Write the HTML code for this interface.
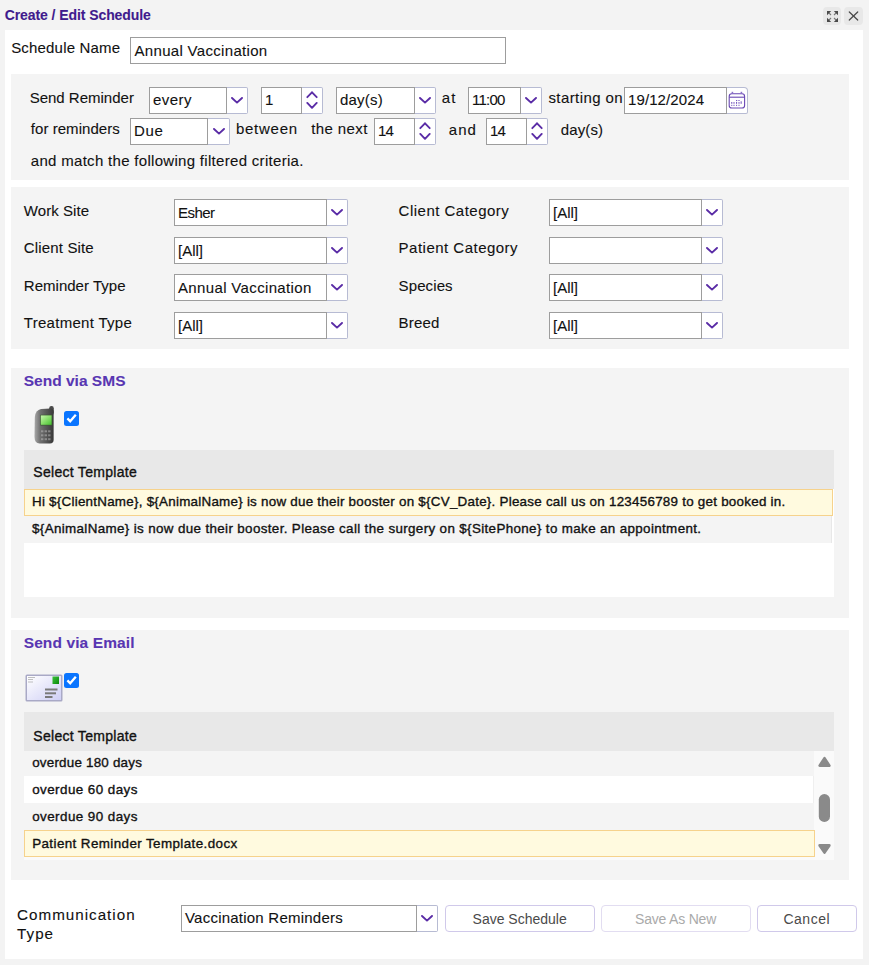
<!DOCTYPE html>
<html><head><meta charset="utf-8"><style>
html,body{margin:0;padding:0}
body{width:869px;height:965px;position:relative;overflow:hidden;background:#f3f3f3;font-family:"Liberation Sans", sans-serif}
.a{position:absolute}
.t{white-space:nowrap;-webkit-text-stroke:0.1px currentColor}
</style></head><body>
<span class="a t" id="t0" style="left:4.70px;top:8.15px;font-size:14px;line-height:14px;font-weight:bold;color:#3f1b8d;letter-spacing:-0.078px;">Create / Edit Schedule</span>
<div class="a" style="left:823px;top:7px;width:17.5px;height:17.5px;background:#e8e8e8;border-radius:4px"></div>
<svg class="a" style="left:826.5px;top:10.5px" width="11" height="11" viewBox="0 0 11 11"><g fill="#4a4a4a"><path d="M0 0 L4.2 0 L0 4.2Z"/><path d="M11 0 L6.8 0 L11 4.2Z"/><path d="M0 11 L4.2 11 L0 6.8Z"/><path d="M11 11 L6.8 11 L11 6.8Z"/></g><g stroke="#4a4a4a" stroke-width="1.1" opacity=".7"><line x1="1.5" y1="1.5" x2="4" y2="4"/><line x1="9.5" y1="1.5" x2="7" y2="4"/><line x1="1.5" y1="9.5" x2="4" y2="7"/><line x1="9.5" y1="9.5" x2="7" y2="7"/></g></svg>
<div class="a" style="left:844px;top:7px;width:19px;height:17.5px;background:#e8e8e8;border-radius:4px"></div>
<svg class="a" style="left:848px;top:11px" width="11" height="10" viewBox="0 0 11 10"><g stroke="#4a4a4a" stroke-width="1.25" stroke-linecap="round"><line x1="1.3" y1="1" x2="9.7" y2="9"/><line x1="9.7" y1="1" x2="1.3" y2="9"/></g></svg>
<div class="a" style="left:5px;top:30px;width:858px;height:929px;background:#fff"></div>
<span class="a t" id="t1" style="left:11.20px;top:40.30px;font-size:15px;line-height:15px;font-weight:normal;color:#111;letter-spacing:0.180px;">Schedule Name</span>
<div class="a" style="left:130px;top:37px;width:376px;height:27px;background:#fff;border:1px solid #9d9d9d;box-sizing:border-box"></div>
<span class="a t" id="t2" style="left:134.50px;top:42.80px;font-size:15px;line-height:15px;font-weight:normal;color:#111;letter-spacing:0.317px;">Annual Vaccination</span>
<div class="a" style="left:11px;top:74px;width:838px;height:106px;background:#f4f4f4"></div>
<span class="a t" id="t3" style="left:29.70px;top:90.00px;font-size:15px;line-height:15px;font-weight:normal;color:#111;letter-spacing:-0.003px;">Send Reminder</span>
<div class="a" style="left:149px;top:87px;width:78px;height:27px;background:#fff;border:1px solid #9d9d9d;box-sizing:border-box"></div>
<div class="a" style="left:227px;top:87px;width:21px;height:27px;background:#fff;border:1px solid #b7bbd3;border-left:none;box-sizing:border-box;border-radius:0 2px 2px 0"></div>
<svg class="a" style="left:231.0px;top:96.5px" width="12" height="7" viewBox="0 0 12 7"><path d="M1 1 L6 5.6 L11 1" fill="none" stroke="#5a2ca6" stroke-width="1.9" stroke-linecap="round" stroke-linejoin="round"/></svg>
<span class="a t" id="t4" style="left:153.00px;top:92.20px;font-size:15px;line-height:15px;font-weight:normal;color:#111;letter-spacing:0.453px;">every</span>
<div class="a" style="left:261px;top:87px;width:41px;height:27px;background:#fff;border:1px solid #9d9d9d;box-sizing:border-box"></div>
<div class="a" style="left:302px;top:87px;width:21px;height:27px;background:#fff;border:1px solid #b7bbd3;border-left:none;box-sizing:border-box;border-radius:0 2px 2px 0"></div>
<svg class="a" style="left:306.0px;top:91px" width="12" height="18" viewBox="0 0 12 18"><path d="M1.3 6.2 L6 1.3 L10.7 6.2" fill="none" stroke="#5a2ca6" stroke-width="1.8" stroke-linecap="round" stroke-linejoin="miter"/><path d="M1.3 11.9 L6 16.8 L10.7 11.9" fill="none" stroke="#5a2ca6" stroke-width="1.9" stroke-linecap="round" stroke-linejoin="round"/></svg>
<span class="a t" id="t5" style="left:265.00px;top:92.20px;font-size:15px;line-height:15px;font-weight:normal;color:#111;letter-spacing:0.000px;">1</span>
<div class="a" style="left:336px;top:87px;width:79px;height:27px;background:#fff;border:1px solid #9d9d9d;box-sizing:border-box"></div>
<div class="a" style="left:415px;top:87px;width:21px;height:27px;background:#fff;border:1px solid #b7bbd3;border-left:none;box-sizing:border-box;border-radius:0 2px 2px 0"></div>
<svg class="a" style="left:419.0px;top:96.5px" width="12" height="7" viewBox="0 0 12 7"><path d="M1 1 L6 5.6 L11 1" fill="none" stroke="#5a2ca6" stroke-width="1.9" stroke-linecap="round" stroke-linejoin="round"/></svg>
<span class="a t" id="t6" style="left:340.00px;top:92.20px;font-size:15px;line-height:15px;font-weight:normal;color:#111;letter-spacing:0.203px;">day(s)</span>
<span class="a t" id="t7" style="left:441.80px;top:90.30px;font-size:15px;line-height:15px;font-weight:normal;color:#111;letter-spacing:1.000px;">at</span>
<div class="a" style="left:468px;top:87px;width:53px;height:27px;background:#fff;border:1px solid #9d9d9d;box-sizing:border-box"></div>
<div class="a" style="left:521px;top:87px;width:21px;height:27px;background:#fff;border:1px solid #b7bbd3;border-left:none;box-sizing:border-box;border-radius:0 2px 2px 0"></div>
<svg class="a" style="left:525.0px;top:96.5px" width="12" height="7" viewBox="0 0 12 7"><path d="M1 1 L6 5.6 L11 1" fill="none" stroke="#5a2ca6" stroke-width="1.9" stroke-linecap="round" stroke-linejoin="round"/></svg>
<span class="a t" id="t8" style="left:472.00px;top:92.20px;font-size:15px;line-height:15px;font-weight:normal;color:#111;letter-spacing:-0.759px;">11:00</span>
<span class="a t" id="t9" style="left:548.40px;top:90.10px;font-size:15px;line-height:15px;font-weight:normal;color:#111;letter-spacing:0.415px;">starting on</span>
<div class="a" style="left:624px;top:87px;width:103px;height:27px;background:#fff;border:1px solid #9d9d9d;box-sizing:border-box"></div>
<div class="a" style="left:727px;top:87px;width:21px;height:27px;background:#fff;border:1px solid #b7bbd3;border-left:none;box-sizing:border-box;border-radius:0 4px 2px 0"></div>
<svg class="a" style="left:728.2px;top:90.5px" width="18" height="18" viewBox="0 0 18 18"><g fill="none" stroke="#6a48b4" stroke-width="1.1"><rect x="1.2" y="2.8" width="15.4" height="14.2" rx="2.6"/><line x1="1.2" y1="6.2" x2="16.6" y2="6.2"/></g><g fill="#8a70c8"><rect x="3.6" y="0.8" width="1.6" height="2"/><rect x="12.6" y="0.8" width="1.6" height="2"/></g><g fill="#7a5cc0"><rect x="8" y="9" width="1.2" height="1.1"/><rect x="10" y="9" width="2" height="0.9" opacity=".7"/><rect x="3.2" y="11" width="1.1" height="1.8"/><rect x="5" y="11" width="2" height="1.8" opacity=".5"/><rect x="8" y="11" width="1.1" height="1.8"/><rect x="10" y="11" width="2" height="1.8" opacity=".5"/><rect x="12.6" y="10.3" width="1.1" height="2.5"/><rect x="3.2" y="13.8" width="1.1" height="1.1"/><rect x="5" y="13.8" width="2" height="0.9" opacity=".7"/><rect x="8" y="13.8" width="1.1" height="1.1"/><rect x="10" y="13.8" width="2" height="0.9" opacity=".7"/></g></svg>
<span class="a t" id="t10" style="left:628.00px;top:92.20px;font-size:15px;line-height:15px;font-weight:normal;color:#111;letter-spacing:0.102px;">19/12/2024</span>
<span class="a t" id="t11" style="left:30.80px;top:121.30px;font-size:15px;line-height:15px;font-weight:normal;color:#111;letter-spacing:0.053px;">for reminders</span>
<div class="a" style="left:130px;top:118px;width:78px;height:27px;background:#fff;border:1px solid #9d9d9d;box-sizing:border-box"></div>
<div class="a" style="left:208px;top:118px;width:22px;height:27px;background:#fff;border:1px solid #b7bbd3;border-left:none;box-sizing:border-box;border-radius:0 2px 2px 0"></div>
<svg class="a" style="left:212.5px;top:127.5px" width="12" height="7" viewBox="0 0 12 7"><path d="M1 1 L6 5.6 L11 1" fill="none" stroke="#5a2ca6" stroke-width="1.9" stroke-linecap="round" stroke-linejoin="round"/></svg>
<span class="a t" id="t12" style="left:134.00px;top:123.20px;font-size:15px;line-height:15px;font-weight:normal;color:#111;letter-spacing:0.684px;">Due</span>
<span class="a t" id="t13" style="left:235.90px;top:121.30px;font-size:15px;line-height:15px;font-weight:normal;color:#111;letter-spacing:0.747px;">between</span>
<span class="a t" id="t14" style="left:311.20px;top:121.30px;font-size:15px;line-height:15px;font-weight:normal;color:#111;letter-spacing:0.404px;">the next</span>
<div class="a" style="left:374px;top:118px;width:41px;height:27px;background:#fff;border:1px solid #9d9d9d;box-sizing:border-box"></div>
<div class="a" style="left:415px;top:118px;width:21px;height:27px;background:#fff;border:1px solid #b7bbd3;border-left:none;box-sizing:border-box;border-radius:0 2px 2px 0"></div>
<svg class="a" style="left:419.0px;top:122px" width="12" height="18" viewBox="0 0 12 18"><path d="M1.3 6.2 L6 1.3 L10.7 6.2" fill="none" stroke="#5a2ca6" stroke-width="1.8" stroke-linecap="round" stroke-linejoin="miter"/><path d="M1.3 11.9 L6 16.8 L10.7 11.9" fill="none" stroke="#5a2ca6" stroke-width="1.9" stroke-linecap="round" stroke-linejoin="round"/></svg>
<span class="a t" id="t15" style="left:378.00px;top:123.20px;font-size:15px;line-height:15px;font-weight:normal;color:#111;letter-spacing:-0.800px;">14</span>
<span class="a t" id="t16" style="left:448.80px;top:121.50px;font-size:15px;line-height:15px;font-weight:normal;color:#111;letter-spacing:1.000px;">and</span>
<div class="a" style="left:486px;top:118px;width:41px;height:27px;background:#fff;border:1px solid #9d9d9d;box-sizing:border-box"></div>
<div class="a" style="left:527px;top:118px;width:21px;height:27px;background:#fff;border:1px solid #b7bbd3;border-left:none;box-sizing:border-box;border-radius:0 2px 2px 0"></div>
<svg class="a" style="left:531.0px;top:122px" width="12" height="18" viewBox="0 0 12 18"><path d="M1.3 6.2 L6 1.3 L10.7 6.2" fill="none" stroke="#5a2ca6" stroke-width="1.8" stroke-linecap="round" stroke-linejoin="miter"/><path d="M1.3 11.9 L6 16.8 L10.7 11.9" fill="none" stroke="#5a2ca6" stroke-width="1.9" stroke-linecap="round" stroke-linejoin="round"/></svg>
<span class="a t" id="t17" style="left:490.00px;top:123.20px;font-size:15px;line-height:15px;font-weight:normal;color:#111;letter-spacing:-0.800px;">14</span>
<span class="a t" id="t18" style="left:560.80px;top:121.50px;font-size:15px;line-height:15px;font-weight:normal;color:#111;letter-spacing:0.103px;">day(s)</span>
<span class="a t" id="t19" style="left:30.80px;top:153.30px;font-size:15px;line-height:15px;font-weight:normal;color:#111;letter-spacing:0.304px;">and match the following filtered criteria.</span>
<div class="a" style="left:11px;top:187px;width:838px;height:162px;background:#f4f4f4"></div>
<span class="a t" id="t20" style="left:23.80px;top:203.10px;font-size:15px;line-height:15px;font-weight:normal;color:#111;letter-spacing:0.056px;">Work Site</span>
<span class="a t" id="t21" style="left:398.60px;top:203.10px;font-size:15px;line-height:15px;font-weight:normal;color:#111;letter-spacing:0.486px;">Client Category</span>
<div class="a" style="left:174px;top:199px;width:153px;height:27px;background:#fff;border:1px solid #9d9d9d;box-sizing:border-box"></div>
<div class="a" style="left:327px;top:199px;width:21px;height:27px;background:#fff;border:1px solid #b7bbd3;border-left:none;box-sizing:border-box;border-radius:0 2px 2px 0"></div>
<svg class="a" style="left:331.0px;top:208.5px" width="12" height="7" viewBox="0 0 12 7"><path d="M1 1 L6 5.6 L11 1" fill="none" stroke="#5a2ca6" stroke-width="1.9" stroke-linecap="round" stroke-linejoin="round"/></svg>
<span class="a t" id="t22" style="left:178.00px;top:204.80px;font-size:15px;line-height:15px;font-weight:normal;color:#111;letter-spacing:-0.547px;">Esher</span>
<div class="a" style="left:549px;top:199px;width:153px;height:27px;background:#fff;border:1px solid #9d9d9d;box-sizing:border-box"></div>
<div class="a" style="left:702px;top:199px;width:21px;height:27px;background:#fff;border:1px solid #b7bbd3;border-left:none;box-sizing:border-box;border-radius:0 2px 2px 0"></div>
<svg class="a" style="left:706.0px;top:208.5px" width="12" height="7" viewBox="0 0 12 7"><path d="M1 1 L6 5.6 L11 1" fill="none" stroke="#5a2ca6" stroke-width="1.9" stroke-linecap="round" stroke-linejoin="round"/></svg>
<span class="a t" id="t23" style="left:553.00px;top:204.80px;font-size:15px;line-height:15px;font-weight:normal;color:#111;letter-spacing:-0.004px;">[All]</span>
<span class="a t" id="t24" style="left:23.80px;top:240.30px;font-size:15px;line-height:15px;font-weight:normal;color:#111;letter-spacing:0.153px;">Client Site</span>
<span class="a t" id="t25" style="left:398.60px;top:240.30px;font-size:15px;line-height:15px;font-weight:normal;color:#111;letter-spacing:0.484px;">Patient Category</span>
<div class="a" style="left:174px;top:237px;width:153px;height:27px;background:#fff;border:1px solid #9d9d9d;box-sizing:border-box"></div>
<div class="a" style="left:327px;top:237px;width:21px;height:27px;background:#fff;border:1px solid #b7bbd3;border-left:none;box-sizing:border-box;border-radius:0 2px 2px 0"></div>
<svg class="a" style="left:331.0px;top:246.5px" width="12" height="7" viewBox="0 0 12 7"><path d="M1 1 L6 5.6 L11 1" fill="none" stroke="#5a2ca6" stroke-width="1.9" stroke-linecap="round" stroke-linejoin="round"/></svg>
<span class="a t" id="t26" style="left:178.00px;top:242.80px;font-size:15px;line-height:15px;font-weight:normal;color:#111;letter-spacing:-0.004px;">[All]</span>
<div class="a" style="left:549px;top:237px;width:153px;height:27px;background:#fff;border:1px solid #9d9d9d;box-sizing:border-box"></div>
<div class="a" style="left:702px;top:237px;width:21px;height:27px;background:#fff;border:1px solid #b7bbd3;border-left:none;box-sizing:border-box;border-radius:0 2px 2px 0"></div>
<svg class="a" style="left:706.0px;top:246.5px" width="12" height="7" viewBox="0 0 12 7"><path d="M1 1 L6 5.6 L11 1" fill="none" stroke="#5a2ca6" stroke-width="1.9" stroke-linecap="round" stroke-linejoin="round"/></svg>
<span class="a t" id="t27" style="left:23.80px;top:278.10px;font-size:15px;line-height:15px;font-weight:normal;color:#111;letter-spacing:0.021px;">Reminder Type</span>
<span class="a t" id="t28" style="left:398.60px;top:278.10px;font-size:15px;line-height:15px;font-weight:normal;color:#111;letter-spacing:0.104px;">Species</span>
<div class="a" style="left:174px;top:274px;width:153px;height:27px;background:#fff;border:1px solid #9d9d9d;box-sizing:border-box"></div>
<div class="a" style="left:327px;top:274px;width:21px;height:27px;background:#fff;border:1px solid #b7bbd3;border-left:none;box-sizing:border-box;border-radius:0 2px 2px 0"></div>
<svg class="a" style="left:331.0px;top:283.5px" width="12" height="7" viewBox="0 0 12 7"><path d="M1 1 L6 5.6 L11 1" fill="none" stroke="#5a2ca6" stroke-width="1.9" stroke-linecap="round" stroke-linejoin="round"/></svg>
<span class="a t" id="t29" style="left:178.00px;top:279.80px;font-size:15px;line-height:15px;font-weight:normal;color:#111;letter-spacing:0.352px;">Annual Vaccination</span>
<div class="a" style="left:549px;top:274px;width:153px;height:27px;background:#fff;border:1px solid #9d9d9d;box-sizing:border-box"></div>
<div class="a" style="left:702px;top:274px;width:21px;height:27px;background:#fff;border:1px solid #b7bbd3;border-left:none;box-sizing:border-box;border-radius:0 2px 2px 0"></div>
<svg class="a" style="left:706.0px;top:283.5px" width="12" height="7" viewBox="0 0 12 7"><path d="M1 1 L6 5.6 L11 1" fill="none" stroke="#5a2ca6" stroke-width="1.9" stroke-linecap="round" stroke-linejoin="round"/></svg>
<span class="a t" id="t30" style="left:553.00px;top:279.80px;font-size:15px;line-height:15px;font-weight:normal;color:#111;letter-spacing:-0.004px;">[All]</span>
<span class="a t" id="t31" style="left:23.80px;top:314.90px;font-size:15px;line-height:15px;font-weight:normal;color:#111;letter-spacing:0.291px;">Treatment Type</span>
<span class="a t" id="t32" style="left:398.60px;top:314.90px;font-size:15px;line-height:15px;font-weight:normal;color:#111;letter-spacing:0.167px;">Breed</span>
<div class="a" style="left:174px;top:312px;width:153px;height:27px;background:#fff;border:1px solid #9d9d9d;box-sizing:border-box"></div>
<div class="a" style="left:327px;top:312px;width:21px;height:27px;background:#fff;border:1px solid #b7bbd3;border-left:none;box-sizing:border-box;border-radius:0 2px 2px 0"></div>
<svg class="a" style="left:331.0px;top:321.5px" width="12" height="7" viewBox="0 0 12 7"><path d="M1 1 L6 5.6 L11 1" fill="none" stroke="#5a2ca6" stroke-width="1.9" stroke-linecap="round" stroke-linejoin="round"/></svg>
<span class="a t" id="t33" style="left:178.00px;top:317.80px;font-size:15px;line-height:15px;font-weight:normal;color:#111;letter-spacing:-0.004px;">[All]</span>
<div class="a" style="left:549px;top:312px;width:153px;height:27px;background:#fff;border:1px solid #9d9d9d;box-sizing:border-box"></div>
<div class="a" style="left:702px;top:312px;width:21px;height:27px;background:#fff;border:1px solid #b7bbd3;border-left:none;box-sizing:border-box;border-radius:0 2px 2px 0"></div>
<svg class="a" style="left:706.0px;top:321.5px" width="12" height="7" viewBox="0 0 12 7"><path d="M1 1 L6 5.6 L11 1" fill="none" stroke="#5a2ca6" stroke-width="1.9" stroke-linecap="round" stroke-linejoin="round"/></svg>
<span class="a t" id="t34" style="left:553.00px;top:317.80px;font-size:15px;line-height:15px;font-weight:normal;color:#111;letter-spacing:-0.004px;">[All]</span>
<div class="a" style="left:11px;top:368px;width:838px;height:250px;background:#f4f4f4"></div>
<span class="a t" id="t35" style="left:23.70px;top:372.68px;font-size:15.5px;line-height:15.5px;font-weight:bold;color:#5836b2;letter-spacing:0.013px;">Send via SMS</span>
<svg class="a" style="left:34px;top:406px" width="20" height="38" viewBox="0 0 20 38">
<defs><linearGradient id="pg" x1="0" x2="1"><stop offset="0" stop-color="#a8a8a8"/><stop offset=".3" stop-color="#707070"/><stop offset="1" stop-color="#383838"/></linearGradient>
<linearGradient id="sg" x1="0" y1="0" x2="1" y2="1"><stop offset="0" stop-color="#c8f5b0"/><stop offset=".45" stop-color="#8ee070"/><stop offset="1" stop-color="#45c030"/></linearGradient></defs>
<rect x="15.2" y="0" width="4.6" height="9" rx="2.2" fill="#4a4a4a"/>
<path d="M7 3 Q1.5 4 0.8 11 L0.5 31 Q0.5 37 5.5 37.5 L16 37.5 Q19.6 37.3 19.6 34 L19.6 5.5 Q19.6 2.6 16.5 2.6 Z" fill="url(#pg)"/>
<rect x="6.2" y="8.8" width="12" height="10.6" rx="0.6" fill="#3a5a30"/>
<rect x="6.8" y="9.4" width="10.8" height="9.4" fill="url(#sg)"/>
<g fill="#b0b0b0" opacity=".6"><rect x="7" y="24.3" width="2.4" height="2"/><rect x="10.6" y="24.3" width="2.4" height="2"/><rect x="14.1" y="24.3" width="2.4" height="2"/><rect x="7" y="28.3" width="2.4" height="2"/><rect x="10.6" y="28.3" width="2.4" height="2"/><rect x="14.1" y="28.3" width="2.4" height="2"/><rect x="7" y="32.2" width="2.4" height="2"/><rect x="10.6" y="32.2" width="2.4" height="2"/><rect x="14.1" y="32.2" width="2.4" height="2"/></g>
</svg>
<svg class="a" style="left:64px;top:411px" width="15" height="15" viewBox="0 0 15 15"><rect x="0" y="0" width="15" height="15" rx="2.5" fill="#0a75ff"/><path d="M3.4 7.4 L6.2 10.3 L11.8 3.8" fill="none" stroke="#fff" stroke-width="2.3"/></svg>
<div class="a" style="left:24px;top:450px;width:810px;height:39.5px;background:#e8e8e8"></div>
<span class="a t" id="t36" style="left:33.30px;top:465.15px;font-size:14px;line-height:14px;font-weight:normal;color:#111;letter-spacing:0.289px;-webkit-text-stroke:0.35px #111">Select Template</span>
<div class="a" style="left:24px;top:489px;width:810px;height:107.5px;background:#fff"></div>
<div class="a" style="left:24px;top:489px;width:809px;height:27px;background:#fffadf;border:1px solid #f6d28c;box-sizing:border-box"></div>
<span class="a t" id="t37" style="left:32.00px;top:495.26px;font-size:13.4px;line-height:13.4px;font-weight:normal;color:#111;letter-spacing:0.249px;-webkit-text-stroke:0.35px #111">Hi ${ClientName}, ${AnimalName} is now due their booster on ${CV_Date}. Please call us on 123456789 to get booked in.</span>
<div class="a" style="left:24px;top:516px;width:808px;height:26.5px;background:#f4f4f4;border-right:1px solid #e8e8e8;box-sizing:border-box"></div>
<span class="a t" id="t38" style="left:32.00px;top:522.26px;font-size:13.4px;line-height:13.4px;font-weight:normal;color:#111;letter-spacing:0.356px;-webkit-text-stroke:0.35px #111">${AnimalName} is now due their booster. Please call the surgery on ${SitePhone} to make an appointment.</span>
<div class="a" style="left:11px;top:630px;width:838px;height:250px;background:#f4f4f4"></div>
<span class="a t" id="t39" style="left:23.70px;top:634.78px;font-size:15.5px;line-height:15.5px;font-weight:bold;color:#5836b2;letter-spacing:0.106px;">Send via Email</span>
<svg class="a" style="left:25px;top:674px" width="38" height="28" viewBox="0 0 38 28">
<defs><linearGradient id="eg" x1="0" y1="0" x2="1" y2="1"><stop offset="0" stop-color="#ffffff"/><stop offset="1" stop-color="#cfcff5"/></linearGradient>
<linearGradient id="st" x1="0" y1="0" x2="1" y2="1"><stop offset="0" stop-color="#3cc03c"/><stop offset="1" stop-color="#0a8a0a"/></linearGradient></defs>
<rect x="0.5" y="0.5" width="37" height="27" rx="1.5" fill="#a9a9c6"/>
<rect x="2" y="2" width="34" height="24" fill="url(#eg)"/>
<rect x="27.5" y="2.5" width="6.5" height="7.5" fill="url(#st)"/>
<g fill="#7a7a7a"><rect x="20" y="14.5" width="12.5" height="2"/><rect x="20" y="18.3" width="11" height="2"/><rect x="20" y="22" width="7.5" height="2"/></g>
<g fill="#b0b0b0"><rect x="3" y="3" width="7" height="0.8"/><rect x="3" y="5.2" width="5" height="0.8"/><rect x="3" y="7.6" width="5" height="0.8"/></g>
</svg>
<svg class="a" style="left:64px;top:673px" width="15" height="15" viewBox="0 0 15 15"><rect x="0" y="0" width="15" height="15" rx="2.5" fill="#0a75ff"/><path d="M3.4 7.4 L6.2 10.3 L11.8 3.8" fill="none" stroke="#fff" stroke-width="2.3"/></svg>
<div class="a" style="left:24px;top:712px;width:810px;height:39px;background:#e8e8e8"></div>
<span class="a t" id="t40" style="left:33.30px;top:728.65px;font-size:14px;line-height:14px;font-weight:normal;color:#111;letter-spacing:0.289px;-webkit-text-stroke:0.35px #111">Select Template</span>
<div class="a" style="left:24px;top:751px;width:810px;height:108.5px;overflow:hidden;background:#fafafa">
<div class="a" style="left:0;top:-2.5px;width:790px;height:27px;background:#f4f4f4"></div>
<div class="a" style="left:0;top:24.5px;width:790px;height:27px;background:#fff;border-right:1px solid #efefef;box-sizing:border-box"></div>
<div class="a" style="left:0;top:51.5px;width:790px;height:27px;background:#f4f4f4"></div>
<div class="a" style="left:0;top:78.5px;width:791px;height:27.5px;background:#fffadf;border:1px solid #f6d28c;box-sizing:border-box"></div>
</div>
<span class="a t" id="t41" style="left:32.20px;top:755.66px;font-size:13.4px;line-height:13.4px;font-weight:normal;color:#111;letter-spacing:0.215px;-webkit-text-stroke:0.35px #111">overdue 180 days</span>
<span class="a t" id="t42" style="left:32.20px;top:782.66px;font-size:13.4px;line-height:13.4px;font-weight:normal;color:#111;letter-spacing:0.442px;-webkit-text-stroke:0.35px #111">overdue 60 days</span>
<span class="a t" id="t43" style="left:32.20px;top:809.66px;font-size:13.4px;line-height:13.4px;font-weight:normal;color:#111;letter-spacing:0.442px;-webkit-text-stroke:0.35px #111">overdue 90 days</span>
<span class="a t" id="t44" style="left:32.20px;top:836.66px;font-size:13.4px;line-height:13.4px;font-weight:normal;color:#111;letter-spacing:0.404px;-webkit-text-stroke:0.35px #111">Patient Reminder Template.docx</span>
<svg class="a" style="left:814px;top:751px" width="20" height="108" viewBox="0 0 20 108"><path d="M5.6 14.6 L10.5 7.2 L15.4 14.6 Z" fill="#8a8a8a" stroke="#8a8a8a" stroke-width="2.6" stroke-linejoin="round"/><rect x="4.8" y="43" width="11.2" height="28" rx="5.6" fill="#8a8a8a"/><path d="M5.6 94.4 L10.5 101.6 L15.4 94.4 Z" fill="#8a8a8a" stroke="#8a8a8a" stroke-width="2.6" stroke-linejoin="round"/></svg>
<span class="a t" id="t45" style="left:17.10px;top:907.23px;font-size:15.2px;line-height:15.2px;font-weight:normal;color:#111;letter-spacing:1.000px;">Communication</span>
<span class="a t" id="t46" style="left:17.10px;top:926.33px;font-size:15.2px;line-height:15.2px;font-weight:normal;color:#111;letter-spacing:1.000px;">Type</span>
<div class="a" style="left:181px;top:905px;width:236px;height:27px;background:#fff;border:1px solid #9d9d9d;box-sizing:border-box"></div>
<div class="a" style="left:417px;top:905px;width:21px;height:27px;background:#fff;border:1px solid #b7bbd3;border-left:none;box-sizing:border-box;border-radius:0 2px 2px 0"></div>
<svg class="a" style="left:421.0px;top:914.5px" width="12" height="7" viewBox="0 0 12 7"><path d="M1 1 L6 5.6 L11 1" fill="none" stroke="#5a2ca6" stroke-width="1.9" stroke-linecap="round" stroke-linejoin="round"/></svg>
<span class="a t" id="t47" style="left:185.00px;top:910.20px;font-size:15px;line-height:15px;font-weight:normal;color:#111;letter-spacing:0.228px;">Vaccination Reminders</span>
<div class="a" style="left:445px;top:905px;width:150px;height:27px;background:#fff;border:1px solid #d0c9ea;border-radius:4px;box-sizing:border-box"></div>
<span class="a t" id="t48" style="left:472.60px;top:912.15px;font-size:14px;line-height:14px;font-weight:normal;color:#4a4a4a;letter-spacing:-0.007px;-webkit-text-stroke:0">Save Schedule</span>
<div class="a" style="left:601px;top:905px;width:150px;height:27px;background:#fff;border:1px solid #e2ddf1;border-radius:4px;box-sizing:border-box"></div>
<span class="a t" id="t49" style="left:635.10px;top:912.15px;font-size:14px;line-height:14px;font-weight:normal;color:#aaaaaa;letter-spacing:-0.207px;-webkit-text-stroke:0">Save As New</span>
<div class="a" style="left:757px;top:905px;width:100px;height:27px;background:#fff;border:1px solid #d0c9ea;border-radius:4px;box-sizing:border-box"></div>
<span class="a t" id="t50" style="left:783.40px;top:912.15px;font-size:14px;line-height:14px;font-weight:normal;color:#4a4a4a;letter-spacing:0.521px;-webkit-text-stroke:0">Cancel</span>
</body></html>
